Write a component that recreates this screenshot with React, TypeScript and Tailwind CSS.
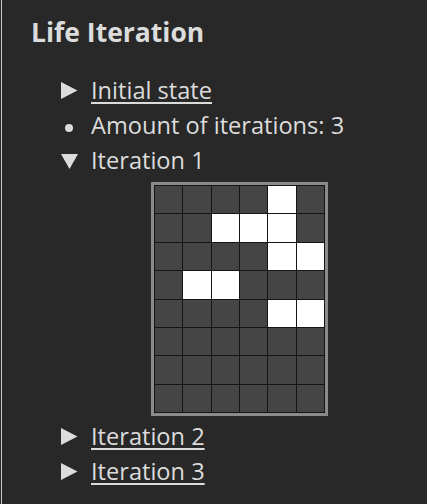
const cells: number[][] = [
  [0, 0, 0, 0, 1, 0],
  [0, 0, 1, 1, 1, 0],
  [0, 0, 0, 0, 1, 1],
  [0, 1, 1, 0, 0, 0],
  [0, 0, 0, 0, 1, 1],
  [0, 0, 0, 0, 0, 0],
  [0, 0, 0, 0, 0, 0],
  [0, 0, 0, 0, 0, 0],
];

function Closed() {
  return (
    <svg width="17" height="17" viewBox="0 0 17 17" className="mt-[9px] shrink-0">
      <polygon points="0,0 16.5,8.5 0,17" fill="#dcdcdc" />
    </svg>
  );
}

function Open() {
  return (
    <svg width="17" height="15" viewBox="0 0 17 15" className="mt-[11px] shrink-0">
      <polygon points="0,0 17,0 8.5,15" fill="#dcdcdc" />
    </svg>
  );
}

function Bullet() {
  return <span className="mt-[16px] ml-[4px] block h-[8px] w-[8px] shrink-0 rounded-full bg-[#dcdcdc]" />;
}

function Row({ marker, children }: { marker: React.ReactNode; children: React.ReactNode }) {
  return (
    <li className="flex h-[35px] items-start">
      <div className="w-[30px] shrink-0 flex">{marker}</div>
      <span className="leading-[35px]">{children}</span>
    </li>
  );
}

function Board() {
  return (
    <div className="ml-[90px] mt-[4px] mb-[3px] w-fit border-[3px] border-[#8a8a8a]">
      <div className="grid h-[228px] w-[171px] grid-cols-6 grid-rows-8 gap-px bg-[#151515] p-px">
        {cells.flat().map((c, i) => (
          <div key={i} className={c ? "bg-white" : "bg-[#454545]"} />
        ))}
      </div>
    </div>
  );
}

export default function App() {
  return (
    <div className="min-h-screen bg-[#282828] pl-px" style={{ fontFamily: '"Open Sans", sans-serif' }}>
      <div className="min-h-[504px] border-l border-[#c8c8c8] pl-[29px] pt-[16px] text-[#dcdcdc]">
        <h1 className="text-[26.5px] font-bold leading-[32px]">Life Iteration</h1>
        <ul className="mt-[25px] ml-[30px] text-[23.6px]">
          <Row marker={<Closed />}>
            <a className="underline decoration-2 underline-offset-[3px]">Initial state</a>
          </Row>
          <Row marker={<Bullet />}>Amount of iterations: 3</Row>
          <Row marker={<Open />}>Iteration 1</Row>
          <li>
            <Board />
          </li>
          <Row marker={<Closed />}>
            <a className="underline decoration-2 underline-offset-[3px]">Iteration 2</a>
          </Row>
          <Row marker={<Closed />}>
            <a className="underline decoration-2 underline-offset-[3px]">Iteration 3</a>
          </Row>
        </ul>
      </div>
    </div>
  );
}
